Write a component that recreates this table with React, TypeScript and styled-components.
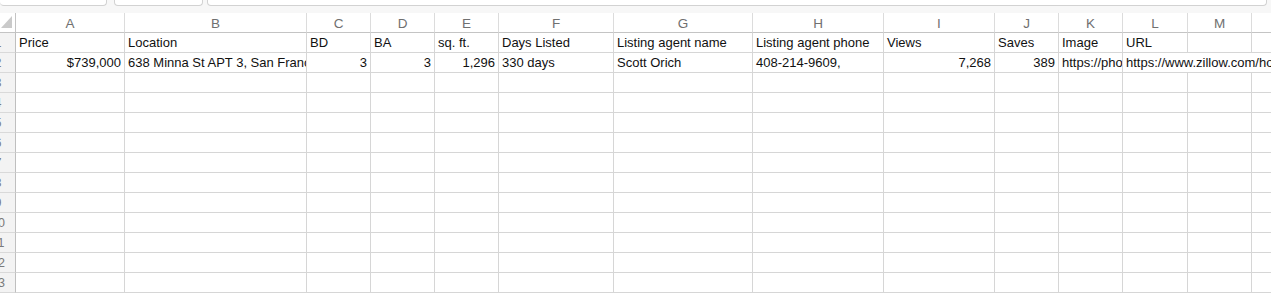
import React from 'react';
import styled, { createGlobalStyle } from 'styled-components';

const COLUMNS = [
  { letter: 'A', width: 109 },
  { letter: 'B', width: 182 },
  { letter: 'C', width: 64 },
  { letter: 'D', width: 64 },
  { letter: 'E', width: 64 },
  { letter: 'F', width: 115 },
  { letter: 'G', width: 139 },
  { letter: 'H', width: 131 },
  { letter: 'I', width: 111 },
  { letter: 'J', width: 64 },
  { letter: 'K', width: 64 },
  { letter: 'L', width: 65 },
  { letter: 'M', width: 64 },
  { letter: 'N', width: 64 },
];

// row header is wider than what shows; the sheet is scrolled a little to the right
const ROW_HEAD = 35;
const SCROLL_X = 19;

const TEMPLATE = `${ROW_HEAD}px ${COLUMNS.map(c => `${c.width}px`).join(' ')}`;

type CellData = { text?: string; align?: 'left' | 'right'; span?: number };

const ROWS: CellData[][] = [
  [
    { text: 'Price' },
    { text: 'Location' },
    { text: 'BD' },
    { text: 'BA' },
    { text: 'sq. ft.' },
    { text: 'Days Listed' },
    { text: 'Listing agent name' },
    { text: 'Listing agent phone' },
    { text: 'Views' },
    { text: 'Saves' },
    { text: 'Image' },
    { text: 'URL' },
    {},
    {},
  ],
  [
    { text: '$739,000', align: 'right' },
    { text: '638 Minna St APT 3, San Francisco, CA 94103' },
    { text: '3', align: 'right' },
    { text: '3', align: 'right' },
    { text: '1,296', align: 'right' },
    { text: '330 days' },
    { text: 'Scott Orich' },
    { text: '408-214-9609,' },
    { text: '7,268', align: 'right' },
    { text: '389', align: 'right' },
    { text: 'https://photos.zillowstatic.com/fp/p_e.jpg' },
    { text: 'https://www.zillow.com/homedetails/638-Minna-St-APT-3', span: 3 },
  ],
];

const TOTAL_ROWS = 13;

const GlobalStyle = createGlobalStyle`
  html, body {
    margin: 0;
    padding: 0;
    background: #ffffff;
  }
  body {
    font-family: 'Liberation Sans', Arial, sans-serif;
    overflow: hidden;
  }
`;

const Sheet = styled.div`
  width: 1271px;
  height: 294px;
  overflow: hidden;
  background: #ffffff;
`;

const Toolbar = styled.div`
  display: flex;
  height: 13px;
  background: #f7f7f7;
`;

const ToolBox = styled.div<{ $width?: number; $first?: boolean }>`
  box-sizing: border-box;
  height: 6px;
  background: #ffffff;
  border: 1px solid #d2d2d2;
  border-top: none;
  border-left: ${p => (p.$first ? 'none' : '1px solid #d2d2d2')};
  border-radius: 0 0 4px 4px;
  width: ${p => (p.$width ? `${p.$width}px` : 'auto')};
  flex: ${p => (p.$width ? 'none' : '1')};
  margin-right: ${p => (p.$first ? '7px' : '4px')};
`;

const Grid = styled.div`
  margin-left: -${SCROLL_X}px;
`;

const Row = styled.div`
  display: grid;
  grid-template-columns: ${TEMPLATE};
  height: 20px;
`;

const Corner = styled.div`
  box-sizing: border-box;
  display: flex;
  justify-content: flex-end;
  align-items: flex-end;
  padding: 0 3px 4px 0;
  border-right: 1px solid #c4c4c4;
  border-bottom: 1px solid #c4c4c4;
`;

const CornerMark = styled.div`
  width: 11px;
  height: 12px;
  background: #cacaca;
  clip-path: polygon(100% 0, 100% 100%, 0 100%);
`;

const ColHead = styled.div`
  box-sizing: border-box;
  display: flex;
  align-items: center;
  justify-content: center;
  font-size: 13.5px;
  color: #707070;
  border-right: 1px solid #dcdcdc;
  border-bottom: 1px solid #c4c4c4;
  padding-top: 1px;
`;

const RowHead = styled.div`
  box-sizing: border-box;
  display: flex;
  align-items: center;
  justify-content: center;
  background: #f3f3f3;
  font-size: 12.5px;
  color: #7a7a7a;
  border-right: 1px solid #bfbfbf;
  border-bottom: 1px solid #d9d9d9;
`;

const Cell = styled.div<{ $align: 'left' | 'right'; $span: number }>`
  box-sizing: border-box;
  grid-column: span ${p => p.$span};
  display: flex;
  align-items: flex-end;
  justify-content: ${p => (p.$align === 'right' ? 'flex-end' : 'flex-start')};
  padding: 0 3px 2px 3px;
  overflow: hidden;
  white-space: nowrap;
  font-size: 13px;
  line-height: 15px;
  color: #111111;
  border-right: 1px solid #d6d6d6;
  border-bottom: 1px solid #d6d6d6;
`;

const CellText = styled.span`
  flex: none;
`;

export default function App() {
  const rows = Array.from({ length: TOTAL_ROWS }, (_, i) => ROWS[i] ?? []);

  return (
    <>
      <GlobalStyle />
      <Sheet>
        <Toolbar>
          <ToolBox $first $width={107} />
          <ToolBox $width={89} />
          <ToolBox />
        </Toolbar>
        <Grid>
          <Row>
            <Corner>
              <CornerMark />
            </Corner>
            {COLUMNS.map(col => (
              <ColHead key={col.letter}>{col.letter}</ColHead>
            ))}
          </Row>
          {rows.map((cells, r) => {
            let used = 0;
            const rendered = cells.map((cell, c) => {
              const span = cell.span ?? 1;
              used += span;
              return (
                <Cell key={c} $align={cell.align ?? 'left'} $span={span}>
                  {cell.text && <CellText>{cell.text}</CellText>}
                </Cell>
              );
            });
            const blanks = Array.from({ length: Math.max(0, COLUMNS.length - used) }, (_, k) => (
              <Cell key={`b${k}`} $align="left" $span={1} />
            ));
            return (
              <Row key={r}>
                <RowHead>{r + 1}</RowHead>
                {rendered}
                {blanks}
              </Row>
            );
          })}
        </Grid>
      </Sheet>
    </>
  );
}
